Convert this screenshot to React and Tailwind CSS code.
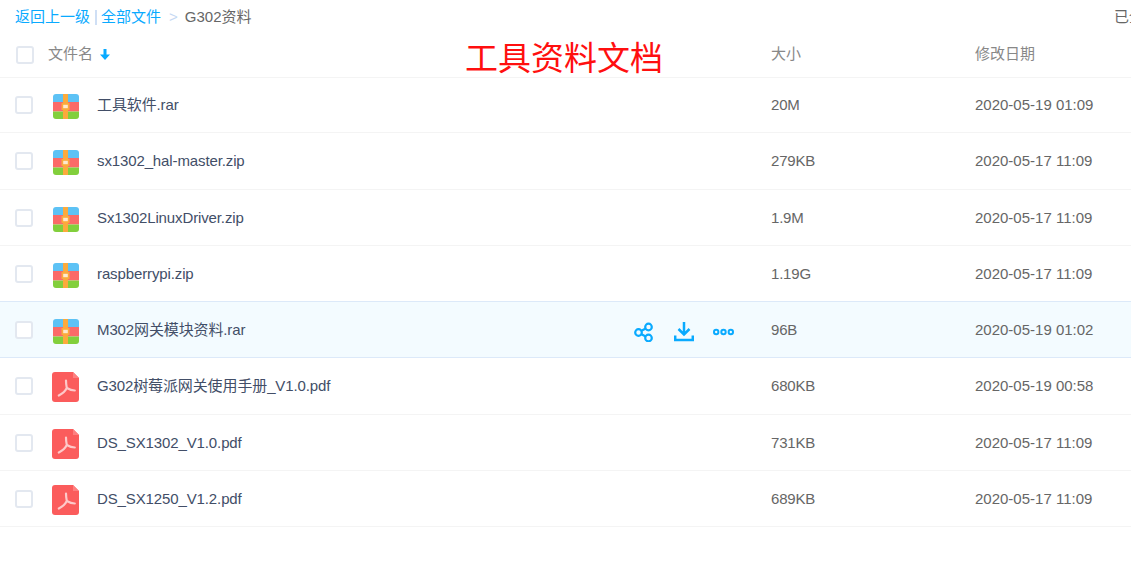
import React from 'react';

const files = [
  { name: '工具软件.rar', size: '20M', date: '2020-05-19 01:09', type: 'zip', height: 'h-[55px]', line: 'border-[#f4f4f4]' },
  { name: 'sx1302_hal-master.zip', size: '279KB', date: '2020-05-17 11:09', type: 'zip', height: 'h-[57px]', line: 'border-[#f4f4f4]' },
  { name: 'Sx1302LinuxDriver.zip', size: '1.9M', date: '2020-05-17 11:09', type: 'zip', height: 'h-[56px] pt-[1px]', line: 'border-[#f4f4f4]' },
  { name: 'raspberrypi.zip', size: '1.19G', date: '2020-05-17 11:09', type: 'zip', height: 'h-[56px] pt-[1px]', line: 'border-[#dce9f9]' },
  { name: 'M302网关模块资料.rar', size: '96B', date: '2020-05-19 01:02', type: 'zip', height: 'h-[56px] pt-[1px]', line: 'border-[#dce9f9]', active: true },
  { name: 'G302树莓派网关使用手册_V1.0.pdf', size: '680KB', date: '2020-05-19 00:58', type: 'pdf', height: 'h-[57px]', line: 'border-[#f4f4f4]' },
  { name: 'DS_SX1302_V1.0.pdf', size: '731KB', date: '2020-05-17 11:09', type: 'pdf', height: 'h-[56px] pt-[1px]', line: 'border-[#f4f4f4]' },
  { name: 'DS_SX1250_V1.2.pdf', size: '689KB', date: '2020-05-17 11:09', type: 'pdf', height: 'h-[56px] pt-[1px]', line: 'border-[#f4f4f4]' },
];

const ZipIcon = () => (
  <svg className="ml-[1px] mt-[3px]" width="26" height="25" viewBox="0 0 26 25">
    <defs>
      <clipPath id="zip-clip"><rect width="26" height="25" rx="3" /></clipPath>
    </defs>
    <g clipPath="url(#zip-clip)">
      <rect width="26" height="8" fill="#5dc2f5" />
      <rect y="8" width="26" height="9.500" fill="#fb6a68" />
      <rect y="17.500" width="26" height="7.500" fill="#82cf3c" />
      <rect x="10" width="5" height="25" fill="#fbaa3c" />
      <rect x="8.500" y="9" width="8" height="7" fill="#fbaa3c" />
      <rect x="10.200" y="10.800" width="4.600" height="3.400" fill="#fde9d0" />
    </g>
  </svg>
);

const PdfIcon = () => (
  <svg className="mt-[2px]" width="27" height="30" viewBox="0 0 27 30">
    <path d="M3 0H21L27 6V27a3 3 0 0 1-3 3H3a3 3 0 0 1-3-3V3a3 3 0 0 1 3-3Z" fill="#fb5c5c" />
    <path d="M21 0V6H27Z" fill="#fd8080" />
    <path d="M14 8.500c0 3 .3 5 .8 7.500M14.800 16c-1.500 3-4 5.500-8 7.500M14.800 16c2.500 1.500 5 2.500 8 2.500" fill="none" stroke="#fdc9c9" strokeWidth="2.200" strokeLinecap="round" />
  </svg>
);

const Checkbox = () => (
  <span className="block w-[18px] h-[18px] rounded-[3px] border-2 border-[#e3e8f0] bg-white" />
);

const Row = ({ file }) => (
  <div className={`flex items-center border-b ${file.height} ${file.line} ${file.active ? 'bg-[#f3fbff]' : ''}`}>
    <div className="w-[52px] pl-[15px] shrink-0"><Checkbox /></div>
    <div className="w-[45px] shrink-0 flex">{file.type === 'zip' ? <ZipIcon /> : <PdfIcon />}</div>
    <div className="w-[537px] shrink-0 text-[15px] tracking-[-0.12px] text-[#424e67] whitespace-nowrap">{file.name}</div>
    <div className="w-[137px] shrink-0 flex items-center">
      {file.active && (
        <div className="flex items-center mt-[4px] text-[#09aaff]">
          <svg width="20" height="20" viewBox="0 0 20 20" fill="none" stroke="currentColor" strokeWidth="2.200">
            <circle cx="4.500" cy="10.500" r="3.300" />
            <circle cx="14.500" cy="5" r="3.300" />
            <circle cx="14.500" cy="16" r="3.300" />
            <path d="M7.500 8.800 11.700 6.500M7.500 12.200 11.700 14.500" />
          </svg>
          <svg className="ml-[20px]" width="20" height="20" viewBox="0 0 20 20" fill="none" stroke="currentColor" strokeWidth="2.500">
            <path d="M10 0V12.500M4.500 7 10 12.500 15.500 7" />
            <path d="M1.200 13.500V18H18.800V13.500" />
          </svg>
          <svg className="ml-[19px]" width="21" height="20" viewBox="0 0 21 20" fill="none" stroke="currentColor" strokeWidth="2">
            <circle cx="3.200" cy="10" r="2.200" />
            <circle cx="10.500" cy="10" r="2.200" />
            <circle cx="17.800" cy="10" r="2.200" />
          </svg>
        </div>
      )}
    </div>
    <div className="w-[204px] shrink-0 text-[15px] tracking-[-0.2px] text-[#666]">{file.size}</div>
    <div className="text-[15px] text-[#666] whitespace-nowrap">{file.date}</div>
  </div>
);

export default function App() {
  return (
    <div className="relative w-[1131px] h-[570px] overflow-hidden bg-white font-['Liberation_Sans','Noto_Sans_CJK_SC',sans-serif]">
      <div className="flex items-center justify-between h-[34px] pl-[15px] text-[15px] whitespace-nowrap">
        <div className="flex items-center">
          <span className="text-[#09aaff]">返回上一级</span>
          <span className="w-[2px] h-[15px] ml-[5px] mr-[4px] bg-[#cfdff5]" />
          <span className="text-[#09aaff]">全部文件</span>
          <span className="ml-[8px] mr-[7px] text-[#c5d8f3]">&gt;</span>
          <span className="text-[#666]">G302资料</span>
        </div>
        <span className="w-[17px] overflow-hidden text-[#666]">已全部加载</span>
      </div>
      <div className="flex items-center h-[44px] pb-[2px] border-b border-[#f4f4f4] text-[15px] text-[#888]">
        <div className="w-[48px] pl-[16px] shrink-0"><Checkbox /></div>
        <div className="w-[723px] shrink-0 flex items-center">
          文件名
          <svg className="ml-[7px]" width="10" height="11" viewBox="0 0 10 11" fill="#09aaff">
            <path d="M3.500 0H6.500V5.500H10L5 11 0 5.500H3.500Z" />
          </svg>
        </div>
        <div className="w-[204px] shrink-0">大小</div>
        <div>修改日期</div>
      </div>
      {files.map((file) => <Row key={file.name} file={file} />)}
      <div className="absolute left-[465px] top-[36px] text-[33px] leading-[40px] text-[#ff0f0f] font-['Noto_Sans_CJK_SC',sans-serif] whitespace-nowrap">工具资料文档</div>
    </div>
  );
}
